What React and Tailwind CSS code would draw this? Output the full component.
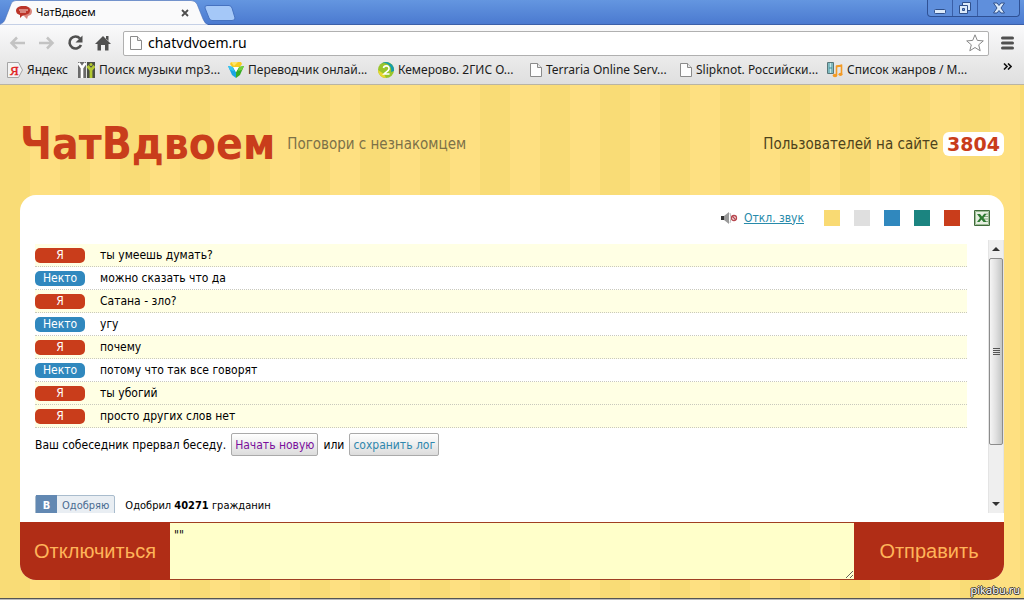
import React, { useState } from 'react';

const messages = [
  { id: 1, me: true, text: 'ты умеешь думать?' },
  { id: 2, me: false, text: 'можно сказать что да' },
  { id: 3, me: true, text: 'Сатана - зло?' },
  { id: 4, me: false, text: 'угу' },
  { id: 5, me: true, text: 'почему' },
  { id: 6, me: false, text: 'потому что так все говорят' },
  { id: 7, me: true, text: 'ты убогий' },
  { id: 8, me: true, text: 'просто других слов нет' },
];

const themes = [
  { name: 'Жёлтая', color: 'bg-[#f9da73]' },
  { name: 'Серая', color: 'bg-[#dfdfdf]' },
  { name: 'Синяя', color: 'bg-[#3088be]' },
  { name: 'Зелёная', color: 'bg-[#1b8480]' },
  { name: 'Красная', color: 'bg-[#c93d1b]' },
];

const PageIcon = () => (
  <svg width="12" height="16" viewBox="0 0 12 16" fill="#fdfdfd" stroke="#8b8b8b" className="shrink-0">
    <path d="M.5 1.5h7l4 4v9H.5z" />
    <path d="M7.5 1.5v4h4" fill="#e8e8e8" />
  </svg>
);

const YandexIcon = () => (
  <svg width="16" height="16" viewBox="0 0 16 16" className="shrink-0">
    <path d="M.5 .5h11l4 7.5-4 7.5H.5z" fill="#f4f4f4" stroke="#a5a5a5" />
    <text x="3" y="13" fontSize="13" fontFamily="Liberation Serif, serif" fill="#e02020" stroke="#e02020" strokeWidth=".4">Я</text>
  </svg>
);

const MusicSearchIcon = () => (
  <svg width="17" height="16" viewBox="0 0 17 16" className="shrink-0">
    <path d="M0 0h8v16H0z" fill="#6a6a6a" />
    <path d="M.5 1l3.500 5 3.500-5M4 5v11" fill="none" stroke="#fff" strokeWidth="2.600" />
    <path d="M9 0h8v16H9z" fill="#4b4f45" />
    <circle cx="13" cy="2.500" r="1.500" fill="#b4c932" />
    <path d="M9.500 4l3.500 4 3.500-4M13 7v9" fill="none" stroke="#b4c932" strokeWidth="2.800" />
  </svg>
);

const TranslatorIcon = () => (
  <svg width="16" height="16" viewBox="0 0 16 16" className="shrink-0">
    <path d="M3 0h10l1 2-3 4H5L2 2z" fill="#f8cc20" />
    <path d="M3 0h7L6 4z" fill="#ffe56b" />
    <path d="M0 4l5 1 3 5v6l-4-3z" fill="#19a6e3" />
    <path d="M0 4l5 1 1 4-4-1z" fill="#36c7ef" />
    <path d="M16 4l-5 1-3 5v6l4-3z" fill="#37ac25" />
    <path d="M16 4l-5 1-1 4 4-1z" fill="#72d13c" />
    <path d="M5 5h6l-3 5z" fill="#fff" />
  </svg>
);

const GisIcon = () => (
  <svg width="16" height="16" viewBox="0 0 16 16" className="shrink-0">
    <circle cx="8" cy="8" r="8" fill="#99c52b" />
    <path d="M3 2a8 8 0 0 1 13 7l-3 1A7 7 0 0 0 3 2z" fill="#159cab" />
    <path d="M0 8a8 8 0 0 0 8 8l-2-4z" fill="#e7d72e" />
    <path d="M5.500 6c.5-3 6-3 5.500 1-.5 2-3 3-5 5h5.500" fill="none" stroke="#fff" strokeWidth="1.600" />
  </svg>
);

const GenresIcon = () => (
  <svg width="16" height="16" viewBox="0 0 16 16" className="shrink-0">
    <path d="M.5 .5h6v11h-6z" fill="#c4e6e8" stroke="#58777a" />
    <path d="M2 1v10M5 1v10M2 6h3" stroke="#3b8d98" fill="none" />
    <path d="M9.500 13V4.500l5-1V12" fill="none" stroke="#f39a24" strokeWidth="1.600" />
    <path d="M9 3.500l6-1v2l-6 1z" fill="#f39a24" />
    <ellipse cx="8" cy="13.500" rx="2.300" ry="1.800" fill="#f39a24" />
    <ellipse cx="13.500" cy="12.300" rx="2" ry="1.600" fill="#f39a24" />
  </svg>
);

const bookmarks = [
  { title: 'Яндекс', icon: YandexIcon, width: 'w-[71px]' },
  { title: 'Поиск музыки mp3...', icon: MusicSearchIcon, width: 'w-[150px]' },
  { title: 'Переводчик онлай...', icon: TranslatorIcon, width: 'w-[150px]' },
  { title: 'Кемерово. 2ГИС О...', icon: GisIcon, width: 'w-[152px]' },
  { title: 'Terraria Online Serv...', icon: PageIcon, width: 'w-[150px]' },
  { title: 'Slipknot. Российски...', icon: PageIcon, width: 'w-[147px]' },
  { title: 'Список жанров / М...', icon: GenresIcon, width: 'w-[150px]' },
];

const TabStrip = () => (
  <div className="flex h-[25px] items-start border-b border-[#3b5fa8] bg-linear-to-b from-[#6496e0] to-[#4b7ad0]">
    <div className="relative h-[25px] w-[208px] shrink-0">
      <svg width="208" height="25" viewBox="0 0 208 25" className="absolute inset-0">
        <path d="M0 24C4 23 5 20 6 17L11 4Q12 .5 16 .5H191Q195 .5 197 4L203 19Q205 24 208 24.500V25H0z" fill="#fafafb" stroke="#496fb5" strokeWidth=".6" />
      </svg>
      <div className="relative flex h-[25px] items-center pl-4 pr-[19px]">
        <svg width="16" height="14" viewBox="0 0 16 14" className="shrink-0">
          <path d="M6 1h6q4 1 4 4.500T12 10l-1 3-3-3H6z" fill="#d9877e" />
          <path d="M5 0h5q4 1 4 4.500T9 9H7l-3 3V9Q0 8 0 4.500T5 0z" fill="#bb3429" />
          <path d="M3 4h9M4 6h6" stroke="#f5d7d2" />
        </svg>
        <span className="ml-1 text-[11px]">ЧатВдвоем</span>
        <button aria-label="Закрыть вкладку" className="ml-auto">
          <svg width="8" height="8" viewBox="0 0 8 8" stroke="#4d4d4d" strokeWidth="1.800">
            <path d="M1 1l6 6M7 1L1 7" />
          </svg>
        </button>
      </div>
    </div>
    <button aria-label="Новая вкладка" className="mt-[5px] -ml-1">
      <svg width="32" height="16" viewBox="0 0 32 16">
        <path d="M3 .5H25Q27 .5 28 3L31 13Q31 15.500 28 15.500H8Q6 15.500 5 13L1 3Q.5 .5 3 .5z" fill="#a5c8f8" stroke="#4672c0" />
      </svg>
    </button>
    <div className="ml-auto mr-1 flex h-[17px] rounded-b border border-t-0 border-[#2f5195] bg-[#5f8fdc]">
      <button aria-label="Свернуть" className="flex w-[25px] items-center justify-center border-r border-[#3a5fa8]">
        <svg width="12" height="14" viewBox="0 0 12 14"><rect x=".5" y="8.500" width="11" height="4" rx="1" fill="#dceafa" stroke="#30518c" /></svg>
      </button>
      <button aria-label="Развернуть" className="flex w-[25px] items-center justify-center border-r border-[#3a5fa8]">
        <svg width="14" height="14" viewBox="0 0 14 14" fill="#dceafa" stroke="#30518c">
          <path d="M4.500 1.500h8v8h-8z" />
          <path d="M1.500 4.500h8v8h-8z" />
          <path d="M4.500 7.500h2v2h-2z" fill="#6d9be1" />
        </svg>
      </button>
      <button aria-label="Закрыть" className="flex w-[41px] items-center justify-center">
        <svg width="12" height="12" viewBox="0 0 12 12">
          <path d="M.5 1h3.500l2 2.500L8 1h3.500L8 6l3.500 5H8L6 8.500 4 11H.5L4 6z" fill="#dceafa" stroke="#30518c" />
        </svg>
      </button>
    </div>
  </div>
);

const Toolbar = () => (
  <div className="flex h-9 items-center bg-linear-to-b from-[#fafafb] to-[#e9e9e9] pl-[9px] pr-2.5">
    <button aria-label="Назад" className="mr-3">
      <svg width="17" height="14" viewBox="0 0 17 14" fill="none" stroke="#c3c3c3" strokeWidth="2.500">
        <path d="M2 7h14M8 1.500L2.500 7 8 12.500" />
      </svg>
    </button>
    <button aria-label="Вперёд" className="mr-3">
      <svg width="17" height="14" viewBox="0 0 17 14" fill="none" stroke="#c3c3c3" strokeWidth="2.500">
        <path d="M1 7h14M9 1.500L14.500 7 9 12.500" />
      </svg>
    </button>
    <button aria-label="Обновить" className="mr-3">
      <svg width="16" height="16" viewBox="0 0 16 16" fill="none" stroke="#505050" strokeWidth="2.600">
        <path d="M13 3.500A6 6 0 1 0 14 10" />
        <path d="M15.500 .5v7h-7z" fill="#505050" stroke="none" />
      </svg>
    </button>
    <button aria-label="Домой" className="mr-3">
      <svg width="16" height="16" viewBox="0 0 16 16" fill="#505050">
        <path d="M8 1l8 8h-2.500v6.500H10V10H6v5.500H2.500V9H0z" />
        <path d="M11 1h2.500v5L11 3.500z" />
      </svg>
    </button>
    <form className="flex h-[25px] flex-1 items-center rounded-xs border border-[#b0b0b0] bg-white pl-1.5 pr-1" onSubmit={(e) => e.preventDefault()}>
      <PageIcon />
      <input aria-label="Адрес" defaultValue="chatvdvoem.ru" className="ml-1.5 min-w-0 flex-1 bg-transparent text-sm outline-none" />
      <button type="button" aria-label="Добавить в закладки">
        <svg width="18" height="18" viewBox="0 0 18 18" fill="#fff" stroke="#888">
          <path d="M9 .8l2.300 5.600 6 .5-4.600 3.900 1.500 6L9 13.500l-5.200 3.300 1.500-6L.7 6.900l6-.5z" />
        </svg>
      </button>
    </form>
    <button aria-label="Меню" className="ml-3">
      <svg width="13" height="14" viewBox="0 0 13 14" stroke="#505050" strokeWidth="3" strokeLinecap="round">
        <path d="M1.500 2h10M1.500 7h10M1.500 12h10" />
      </svg>
    </button>
  </div>
);

const BookmarksBar = () => (
  <nav className="flex h-6 items-center justify-between border-b border-[#b9b4a4] bg-linear-to-b from-[#e9e9e9] to-[#dfdfdf] pl-[7px] pr-3">
    <div className="flex h-6 min-w-0 items-center overflow-hidden pb-1.5">
      {bookmarks.map((item) => {
        const Icon = item.icon;
        return (
          <a key={item.title} href="#" className={`${item.width} flex shrink-0 items-center gap-1 whitespace-nowrap text-xs text-[#1c1c1c]`}>
            <Icon />
            {item.title}
          </a>
        );
      })}
    </div>
    <button aria-label="Другие закладки" className="pb-3">
      <svg width="9" height="7" viewBox="0 0 9 7" fill="none" stroke="#111" strokeWidth="1.600">
        <path d="M1 .5l3 3-3 3M5 .5l3 3-3 3" />
      </svg>
    </button>
  </nav>
);

const ChatTools = ({ muted, onMute }) => (
  <div className="flex h-[45px] shrink-0 items-center justify-end pr-3.5">
    <svg width="17" height="12" viewBox="0 0 17 12" className="mr-1.5">
      <path d="M0 4h3v4H0z" fill="#333" />
      <path d="M3 4l5-4v12L3 8z" fill="#999" />
      <path d="M9 1q2 5 0 10" fill="none" stroke="#bbb" />
      <circle cx="13" cy="6" r="2.500" fill="#fff" stroke="#b84850" strokeWidth="1.300" />
      <path d="M11.300 4.300l3.400 3.400" stroke="#b84850" strokeWidth="1.300" />
    </svg>
    <button onClick={onMute} className="mr-5 font-[DejaVu_Sans_Condensed,sans-serif] text-xs text-[#278aaa] underline">
      {muted ? 'Вкл. звук' : 'Откл. звук'}
    </button>
    <div className="flex gap-3.5">
      {themes.map((t) => (
        <button key={t.name} aria-label={t.name} className={`${t.color} h-4 w-4`} />
      ))}
      <button aria-label="Сохранить в Excel">
        <svg width="16" height="16" viewBox="0 0 16 16">
          <path d="M.5 .5h15v15H.5z" fill="#e6efe1" stroke="#3f6b3b" />
          <path d="M1.500 1.500h13v13h-13z" fill="none" stroke="#9dbb95" />
          <path d="M10 4h4M10 6.500h4M10 9h4M10 11.500h4" stroke="#8aa984" />
          <path d="M3 4h3l2 2.500L10 4h2.500L9.500 8l3 4h-3L7.500 9.500 5.500 12H3l3-4z" fill="#2e7b32" />
        </svg>
      </button>
    </div>
  </div>
);

const Scrollbar = () => (
  <div className="flex w-4 shrink-0 flex-col border-x border-[#e4e4e4] bg-[#efefef]">
    <button aria-label="Вверх" className="flex h-[18px] shrink-0 items-center justify-center">
      <svg width="8" height="4" viewBox="0 0 8 4"><path d="M0 4l4-4 4 4z" fill="#333" /></svg>
    </button>
    <div className="flex min-h-0 flex-1 flex-col">
      <div className="flex h-[79%] flex-col items-center justify-center gap-px rounded-xs border border-[#8c8c8c] bg-linear-to-r from-[#f5f5f5] via-[#e0e0e0] to-[#c4c6c6]">
        <span className="h-px w-[7px] bg-[#555]" />
        <span className="h-px w-[7px] bg-[#555]" />
        <span className="h-px w-[7px] bg-[#555]" />
        <span className="h-px w-[7px] bg-[#555]" />
      </div>
    </div>
    <button aria-label="Вниз" className="flex h-[18px] shrink-0 items-center justify-center">
      <svg width="8" height="4" viewBox="0 0 8 4"><path d="M0 0h8L4 4z" fill="#333" /></svg>
    </button>
  </div>
);

const Message = ({ me, text }) => (
  <li className={`flex h-[23px] items-center border-b border-dotted border-[#c9c9bd] ${me ? 'bg-[#ffffe4]' : 'bg-white'}`}>
    <span className={`mr-[15px] h-[15px] w-[50px] shrink-0 rounded-[5px] text-center leading-[15px] text-white ${me ? 'bg-[#c93d1b]' : 'bg-[#3088be]'}`}>
      {me ? 'Я' : 'Некто'}
    </span>
    {text}
  </li>
);

const logButton = 'h-[23px] rounded-xs border border-[#aaa] bg-linear-to-b from-white to-[#dcdcdc] px-[3px]';

const App = () => {
  const [muted, setMuted] = useState(false);
  const [draft, setDraft] = useState('""');

  return (
    <div className="flex h-screen min-h-[420px] flex-col overflow-hidden font-['Noto_Sans',sans-serif] text-black">
      <header className="shrink-0">
        <TabStrip />
        <Toolbar />
        <BookmarksBar />
      </header>

      <main className="flex min-h-0 flex-1 flex-col bg-[repeating-linear-gradient(90deg,#f9dc76_0_30px,#fee081_30px_60px)] px-5 pb-[18px] font-[DejaVu_Sans_Condensed,sans-serif]">
        <div className="flex h-[110px] shrink-0 items-center justify-between pt-2">
          <div className="flex items-center">
            <h1 className="mr-3 text-[44px] font-bold leading-none text-[#c93d1b]">ЧатВдвоем</h1>
            <p className="text-[15px] text-[#7c7148]">Поговори с незнакомцем</p>
          </div>
          <div className="flex items-center gap-[5px]">
            <span className="text-[15px] text-[#4d421c]">Пользователей на сайте</span>
            <span className="rounded-md bg-white px-1 font-[DejaVu_Sans,sans-serif] text-[19px] font-bold leading-6 text-[#c93d1b]">3804</span>
          </div>
        </div>

        <section className="flex min-h-0 flex-1 flex-col overflow-hidden rounded-2xl bg-white">
          <ChatTools muted={muted} onMute={() => setMuted(!muted)} />

          <div className="mb-[9px] flex min-h-0 flex-1 pl-[15px] text-xs">
            <div className="mr-[21px] min-w-0 flex-1 overflow-hidden pt-1">
              <ul>
                {messages.map((m) => (
                  <Message key={m.id} me={m.me} text={m.text} />
                ))}
              </ul>
              <div className="mt-[5px] flex items-center gap-[5px]">
                <span>Ваш собеседник прервал беседу.</span>
                <button className={`${logButton} text-[#7a0f9c]`}>Начать новую</button>
                <span>или</span>
                <button className={`${logButton} text-[#2f87ad]`}>сохранить лог</button>
              </div>
              <div className="mt-[39px] flex items-center text-[11px]">
                <button className="mr-2.5 flex h-[22px] items-center rounded-xs border border-[#a9bccd] bg-[#e9eef3] text-[#4a6c91]">
                  <span className="flex h-[22px] w-[21px] items-center justify-center bg-[#6288b2] font-bold text-white">В</span>
                  <span className="px-[5px]">Одобряю</span>
                </button>
                <span>Одобрил <b>40271</b> гражданин</span>
              </div>
            </div>
            <Scrollbar />
          </div>

          <form className="flex h-[58px] shrink-0 font-['Liberation_Sans',sans-serif] text-xl text-[#ffb459]" onSubmit={(e) => e.preventDefault()}>
            <button type="button" className="w-[150px] bg-[#b02d16]">Отключиться</button>
            <textarea
              aria-label="Сообщение"
              value={draft}
              onChange={(e) => setDraft(e.target.value)}
              className="h-full min-w-0 flex-1 resize-y border-y border-[#a04022] bg-[#ffffca] px-1 py-1 font-[DejaVu_Sans_Condensed,sans-serif] text-xs text-black outline-none"
            />
            <button type="submit" className="w-[150px] bg-[#b02d16]">Отправить</button>
          </form>
        </section>
      </main>

      <footer className="relative h-0.5 shrink-0 border-t border-[#555] bg-[#bbb]">
        <span className="absolute right-1 bottom-1 text-[11px] leading-3 text-white [text-shadow:1px_0_#333,-1px_0_#333,0_1px_#333,0_-1px_#333]">pikabu.ru</span>
      </footer>
    </div>
  );
};

export default App;
